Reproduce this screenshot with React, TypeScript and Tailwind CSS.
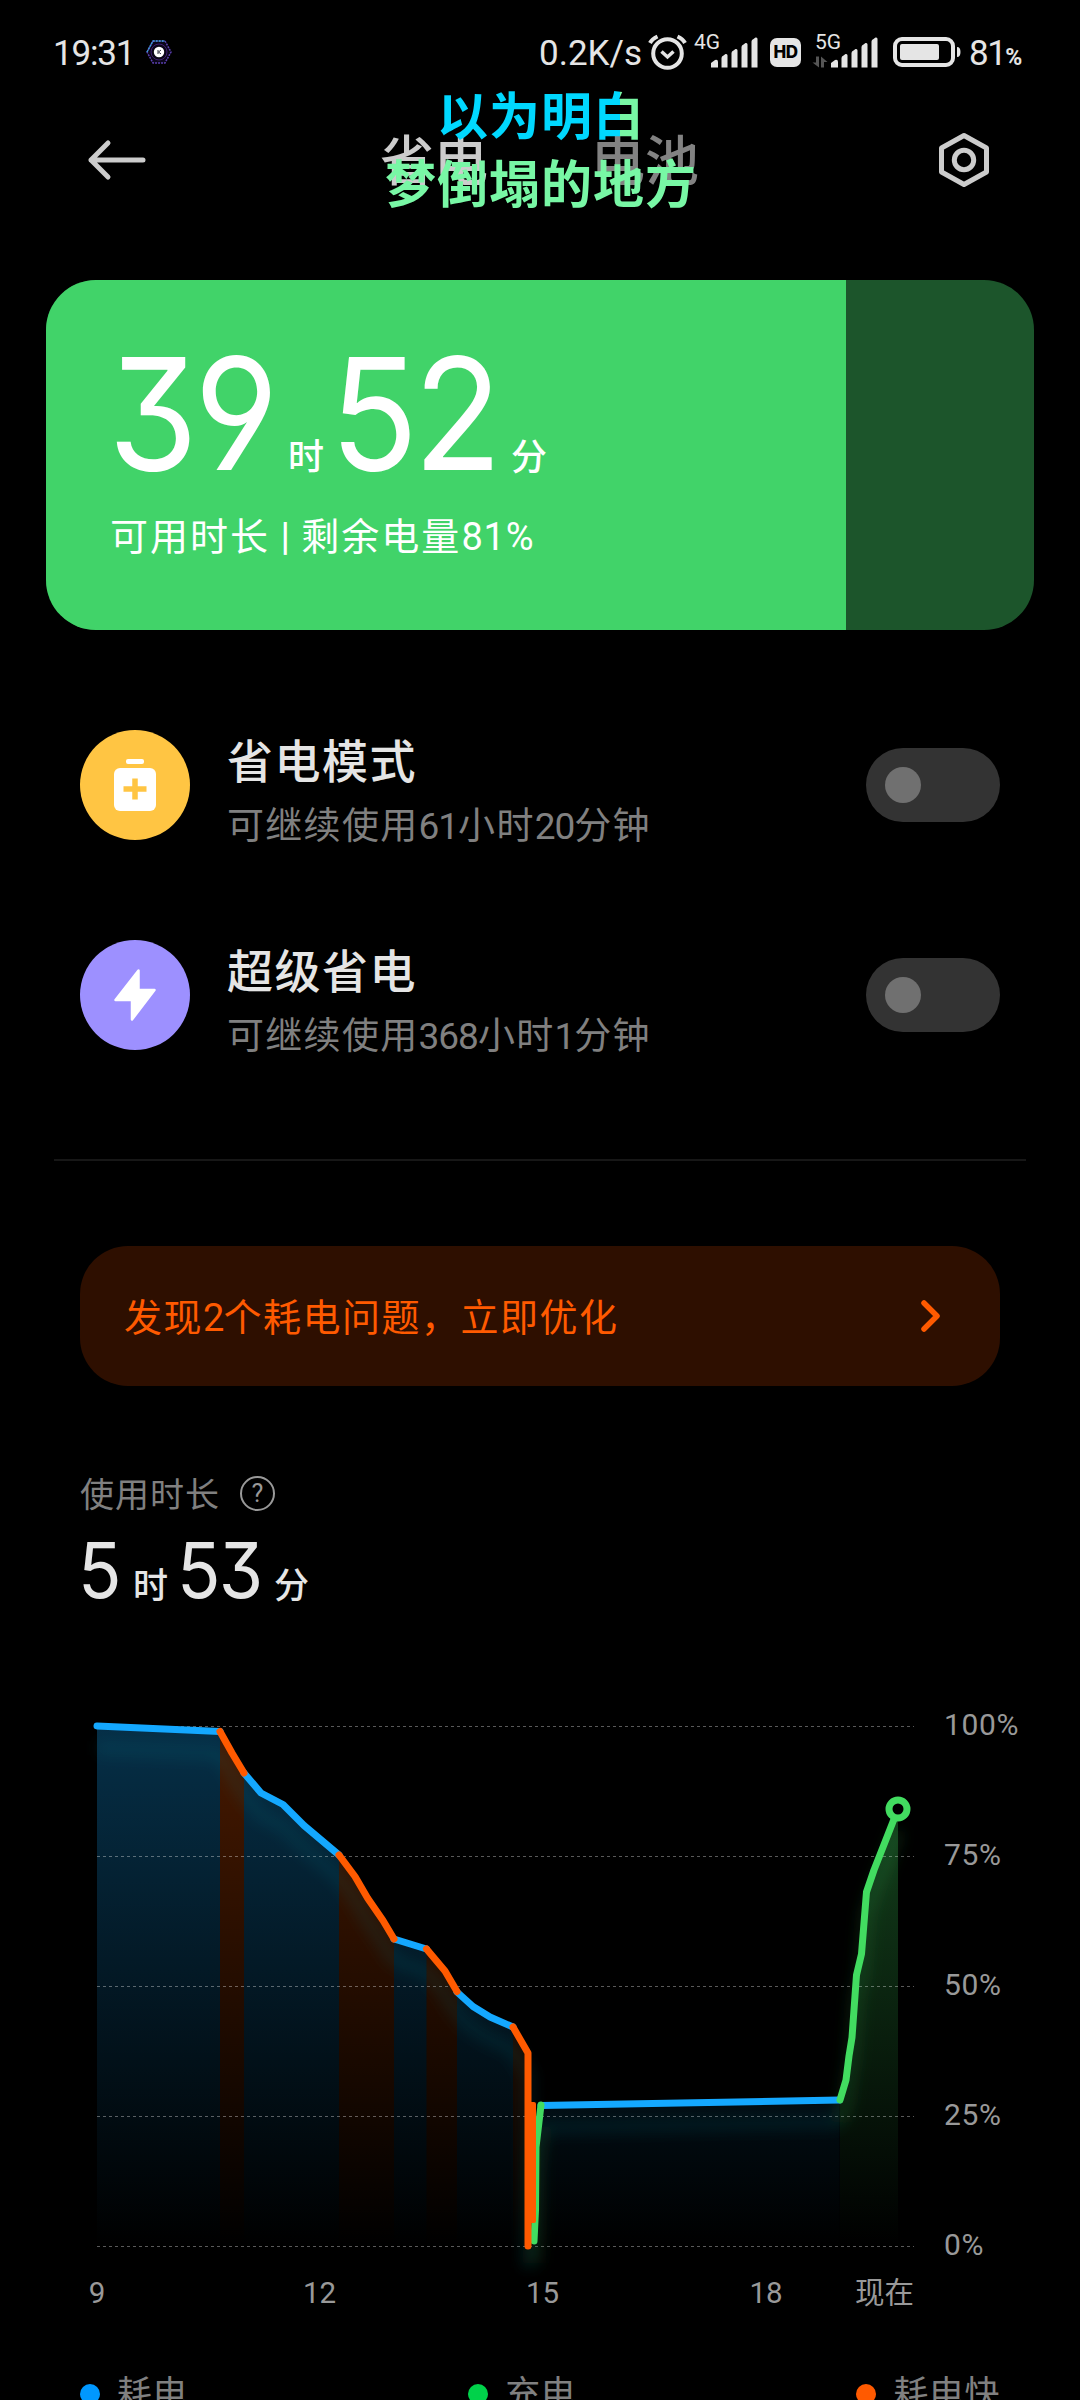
import React, { useState } from 'react';

type Point = [number, number];
type Kind = 'drain' | 'fast' | 'charge';

const COLORS: Record<Kind, string> = {
    drain: '#14a8ff',
    fast: '#ff5a00',
    charge: '#42dc60',
};

// Battery curve in chart coordinates, split where the usage type changes
const SEGMENTS: { kind: Kind; points: Point[] }[] = [
    { kind: 'drain', points: [[97, 46], [220, 51.5]] },
    { kind: 'drain', points: [[244, 93], [261, 113], [283, 124.5], [304, 145.5], [339, 175]] },
    { kind: 'drain', points: [[394, 259], [426.5, 269]] },
    { kind: 'drain', points: [[457, 312], [473, 326.5], [490, 337], [513, 347]] },
    { kind: 'drain', points: [[541, 425.5], [839.5, 420]] },
    { kind: 'charge', points: [[534, 561], [535.5, 530], [536, 467], [541, 425]] },
    { kind: 'fast', points: [[220, 51.5], [232, 73], [244, 93]] },
    { kind: 'fast', points: [[339, 175], [355, 196.5], [367.5, 218], [383, 240.5], [394, 259]] },
    { kind: 'fast', points: [[426.5, 269], [445, 291], [457, 311.5]] },
    { kind: 'fast', points: [[513, 347], [528, 373], [528, 566]] },
    { kind: 'charge', points: [[840, 420], [846, 400], [849, 376], [852, 357.5], [856.5, 295], [861.5, 274], [866.5, 212], [874, 190], [898, 129]] },
];

const GRID = [
    { y: 46.5, label: '100%' },
    { y: 176.5, label: '75%' },
    { y: 306.5, label: '50%' },
    { y: 436.5, label: '25%' },
    { y: 566.5, label: '0%' },
];

const HOURS = [
    { x: 97, label: '9' },
    { x: 319.5, label: '12' },
    { x: 542.5, label: '15' },
    { x: 766, label: '18' },
    { x: 884.5, label: '现在' },
];

const toLine = (points: Point[]) => points.map(([x, y], i) => `${i ? 'L' : 'M'}${x} ${y}`).join(' ');

const toArea = (points: Point[]) =>
    `${toLine(points)} L${points[points.length - 1][0]} 566 L${points[0][0]} 566 Z`;

const Signal = ({ label, arrows }: { label: string; arrows?: boolean }) => (
    <svg width="66" height="40" viewBox="0 0 66 40" fill="#e5e5e5" className="shrink-0 overflow-visible">
        <text x={arrows ? 2 : 1} y="17" fontSize="21" fontFamily="Roboto, sans-serif">{label}</text>
        <path d="M18 35.500v-4.500l4-3q3-1 3 2v5.500z" />
        <path d="M28.500 35.500V26q0-2 2-2.500l2-1.500q2-.5 2 1.500v12z" />
        <path d="M38.500 35.500V21q0-2 2-2.500l2-1.500q2-.5 2 1.500v17z" />
        <path d="M48.500 35.500V15q0-2 2-2.500l2-1.500q2-.5 2 1.500v23z" />
        <path d="M58.500 35.500V9.500q0-2 2-2.500l2-1.500q2-.5 2 1.500v28.500z" />
        {arrows && <path d="M3 24.500h3v11L-.5 30.500H3zM8 35.500v-11l6.500 5.500H11v5.500z" fill="#555" />}
    </svg>
);

const StatusBar = () => (
    <div className="flex h-[104px] items-center pl-[53px] text-[35px] leading-none text-[#e5e5e5]">
        <span className="w-[93px] pt-0.5 tracking-[-1.200px]">19:31</span>
        <svg width="26" height="26" viewBox="0 0 26 26" className="shrink-0">
            <path d="M7 2h12l6 11-6 11H7L1 13z" fill="#0a0618" stroke="#5b3fb0" strokeWidth="1.500" strokeDasharray="2 1" />
            <path d="M1 13L7 2h12" fill="none" stroke="#3aa0d8" strokeWidth="1.500" strokeDasharray="2 1" />
            <circle cx="13" cy="13" r="8" fill="none" stroke="#3d1d6e" />
            <circle cx="13" cy="13" r="5.200" fill="#fff" />
            <path d="M12 11v4M15 11l-2.500 2 2.500 2" stroke="#334" fill="none" />
        </svg>
        <span className="ml-[367px] w-[107px] whitespace-nowrap pt-0.5">0.2K/s</span>
        <svg width="42" height="42" viewBox="0 0 42 42" fill="none" stroke="#e5e5e5" strokeLinecap="round" className="shrink-0">
            <circle cx="21.500" cy="22.500" r="14.300" strokeWidth="4" />
            <path d="M15.500 20.500l6 5.500 6-5.500" strokeWidth="3.500" strokeLinecap="butt" />
            <path d="M4 12Q6 8 11.500 5.500M39 12Q37 8 31.500 5.500" strokeWidth="4" strokeLinecap="butt" />
        </svg>
        <div className="ml-[5px]"><Signal label="4G" /></div>
        <div className="ml-[11px] flex h-[29px] w-[31px] items-center justify-center rounded-[7px] bg-[#e5e5e5] font-[Inter] text-[17px] font-extrabold tracking-[-0.5px] text-black">HD</div>
        <div className="ml-3"><Signal label="5G" arrows /></div>
        <svg width="68" height="32" viewBox="0 0 68 32" className="ml-3.5 shrink-0">
            <rect x="2" y="3" width="58" height="26" rx="7" fill="none" stroke="#e5e5e5" strokeWidth="4" />
            <rect x="7" y="8" width="39" height="16" rx="2" fill="#e5e5e5" />
            <path d="M64 11q3.500 0 3.500 5t-3.500 5z" fill="#e5e5e5" />
        </svg>
        <div className="ml-2 flex items-baseline pt-0.5">
            <span className="tracking-[-1.500px]">81</span>
            <span className="text-[23px] font-bold">%</span>
        </div>
    </div>
);

const Header = () => (
    <div className="flex h-28 items-center pl-[87px]">
        <svg width="60" height="44" viewBox="0 0 60 44" fill="none" stroke="#ccc" strokeWidth="5" strokeLinecap="round" strokeLinejoin="round">
            <path d="M56 22H4M21 5L4 22l17 17" />
        </svg>
        <span className="ml-[233px] w-[211px] pt-[5px] text-[54px] font-medium leading-none text-[#ccc]">省电</span>
        <span className="w-[345px] pt-[5px] text-[54px] font-medium leading-none text-[#828282]">电池</span>
        <svg width="56" height="58" viewBox="0 0 56 58" fill="none" stroke="#ccc" strokeWidth="5" strokeLinejoin="round" className="shrink-0">
            <path d="M28 4.500L50.500 17v24L28 53.500 5.500 41V17z" />
            <circle cx="28" cy="29" r="9.700" />
        </svg>
    </div>
);

// Floating desktop lyrics drawn over the header
const Lyrics = () => (
    <div className="absolute left-px top-[84px] flex w-full flex-col items-center text-[51px] font-bold leading-[68px] tracking-[1px]">
        <span className="bg-[linear-gradient(90deg,#00d8ff_88%,#78f7a5_88%)] bg-clip-text text-transparent">以为明白</span>
        <span className="text-[#78f7a5]">梦倒塌的地方</span>
    </div>
);

const BigNumber = ({ value, className }: { value: string; className: string }) => (
    <span className={`inline-block origin-left scale-x-[.93] font-[Inter] [font-feature-settings:'cv03','cv04','cv09'] ${className}`}>{value}</span>
);

const BatteryCard = () => (
    <div className="mx-[46px] mt-16 flex h-[350px] overflow-hidden rounded-[50px] bg-[#1c552b]">
        <div className="w-[800px] bg-[#41d369] pl-[62px] pt-[60px] text-white">
            <div className="flex h-[148px] items-baseline leading-[148px]">
                <BigNumber value="39" className="w-[180px] text-[156px] tracking-[-4px]" />
                <span className="w-[42px] text-[36px] font-medium">时</span>
                <BigNumber value="52" className="w-[181px] text-[156px] tracking-[-5px]" />
                <span className="text-[36px] font-medium">分</span>
            </div>
            <div className="ml-0.5 mt-[27px] text-[38px] leading-[44px] tracking-[2px]">
                可用时长<span className="font-medium tracking-[1px]"> | </span>剩余电量<span className="tracking-[0.8px]">81%</span>
            </div>
        </div>
    </div>
);

const Toggle = ({ label }: { label: string }) => {
    const [on, setOn] = useState(false);

    return (
        <button
            role="switch"
            aria-checked={on}
            aria-label={label}
            onClick={() => setOn(!on)}
            className={`flex h-[74px] w-[134px] items-center rounded-full px-[19px] cursor-pointer ${on ? 'justify-end bg-[#42d46a]' : 'bg-[#333]'}`}>
            <span className="size-9 rounded-full bg-[#707070]" />
        </button>
    );
};

interface ModeRowProps {
    title: string;
    color: string;
    icon: React.ReactNode;
    children: React.ReactNode;
}

const ModeRow = ({ title, color, icon, children }: ModeRowProps) => (
    <div className="flex h-[110px] items-center">
        <div className={`flex size-[110px] items-center justify-center rounded-full ${color}`}>{icon}</div>
        <div className="ml-[37px] flex-1 pt-[15px]">
            <div className="text-[46px] font-medium leading-[60px] tracking-[1.500px] text-[#e5e5e5]">{title}</div>
            <div className="mt-[9px] text-[37px] leading-[52px] tracking-[1.300px] text-[#808080]">{children}</div>
        </div>
        <Toggle label={title} />
    </div>
);

const Digits = ({ children }: { children: React.ReactNode }) => <span className="tracking-[-1px]">{children}</span>;

const UsageChart = () => (
    <svg width="1080" height="640" viewBox="0 0 1080 640" className="block" fontFamily="Roboto, 'Noto Sans CJK SC', sans-serif">
        <defs>
            {(Object.keys(COLORS) as Kind[]).map((kind) => (
                <linearGradient key={kind} id={kind} gradientUnits="userSpaceOnUse" x1="0" y1="46" x2="0" y2="566">
                    <stop offset="0" stopColor={COLORS[kind]} stopOpacity={kind === 'charge' ? 0.34 : 0.28} />
                    <stop offset="1" stopColor={COLORS[kind]} stopOpacity="0" />
                </linearGradient>
            ))}
            <filter id="glow" filterUnits="userSpaceOnUse" x="0" y="0" width="1080" height="640">
                <feGaussianBlur stdDeviation="7" />
            </filter>
        </defs>

        {SEGMENTS.map(({ kind, points }, i) => (
            <path key={i} d={toArea(points)} fill={`url(#${kind})`} />
        ))}

        {GRID.map(({ y, label }) => (
            <g key={label}>
                <line x1="97" x2="914" y1={y} y2={y} stroke="#fff" strokeOpacity=".35" strokeDasharray="3 3" />
                <text x="944" y={y + 8} fontSize="30" letterSpacing=".6" fill="#999">{label}</text>
            </g>
        ))}

        <g fill="none" strokeWidth="14" strokeLinejoin="round" filter="url(#glow)" transform="translate(0 22)">
            {SEGMENTS.map(({ kind, points }, i) => (
                <path key={i} d={toLine(points)} stroke={kind === 'charge' ? '#42dc60' : '#1e8aa0'} strokeOpacity=".12" />
            ))}
        </g>

        <g fill="none" strokeWidth="7" strokeLinecap="round" strokeLinejoin="round">
            {SEGMENTS.map(({ kind, points }, i) => (
                <path key={i} d={toLine(points)} stroke={COLORS[kind]} />
            ))}
        </g>
        <rect x="528" y="422" width="8" height="121" rx="2" fill="#ff5a00" />
        <circle cx="898" cy="129" r="9" fill="#000" stroke="#42dc60" strokeWidth="7" />

        {HOURS.map(({ x, label }) => (
            <text key={label} x={x} y="622.500" fontSize="29.500" textAnchor="middle" fill="#999">{label}</text>
        ))}
    </svg>
);

const LegendItem = ({ label, color }: { label: string; color: string }) => (
    <div className="flex items-center gap-[17px]">
        <span className={`size-5 rounded-full ${color}`} />
        <span className="pt-0.5 text-[35px] leading-none tracking-[0.5px] text-[#808080]">{label}</span>
    </div>
);

const App = () => {
    return (
        <div lang="zh-CN" className="relative h-[2400px] w-[1080px] overflow-hidden bg-black font-[Roboto,'Noto_Sans_CJK_SC',sans-serif]">
            <StatusBar />
            <Header />
            <Lyrics />
            <BatteryCard />

            {/* Power saving modes */}
            <div className="mx-20 mt-[100px] flex flex-col gap-[100px]">
                <ModeRow
                    title="省电模式"
                    color="bg-[#ffc543]"
                    icon={
                        <svg width="42" height="52" viewBox="0 0 42 52">
                            <rect x="12" width="18" height="5" rx="2" fill="#fff" />
                            <rect y="9" width="42" height="43" rx="6" fill="#fff" />
                            <path d="M21 19.500v21M9.500 30h23" stroke="#ffc543" strokeWidth="5.500" />
                        </svg>
                    }>
                    可继续使用<Digits>61</Digits>小时<Digits>20</Digits>分钟
                </ModeRow>
                <ModeRow
                    title="超级省电"
                    color="bg-[#9d90ff]"
                    icon={
                        <svg width="42" height="52" viewBox="0 0 42 52" fill="#fff" stroke="#fff" strokeWidth="2.500" strokeLinejoin="round">
                            <path d="M24.500 1.500V21H40.500L18 50.500V31H1.500z" />
                        </svg>
                    }>
                    可继续使用<Digits>368</Digits>小时<Digits>1</Digits>分钟
                </ModeRow>
            </div>

            <div className="mx-[54px] mt-[109px] h-0.5 bg-[#171717]" />

            {/* Warning banner */}
            <div className="mx-20 mt-[85px] flex h-[140px] items-center justify-between rounded-[48px] bg-[#2e0f00] pl-11 pr-[57px] text-[#ff5a00]">
                <span className="pt-[3px] text-[38px] leading-none tracking-[1.500px]">发现<Digits>2</Digits>个耗电问题，立即优化</span>
                <svg width="24" height="36" viewBox="0 0 24 36" fill="none" stroke="#ff5a00" strokeWidth="5.500" strokeLinecap="round" strokeLinejoin="round">
                    <path d="M5 5l13 13L5 31" />
                </svg>
            </div>

            {/* Usage time */}
            <div className="mx-20 mt-[86px]">
                <div className="flex h-[42px] items-center text-[34px] leading-none tracking-[1px] text-[#808080]">
                    <span className="pt-[3px]">使用时长</span>
                    <span className="ml-5 flex size-[35px] items-center justify-center rounded-full border-2 border-[#999] pl-px text-[25px] text-[#999]">?</span>
                </div>
                <div className="mt-[19px] flex h-[76px] items-baseline leading-[75px] text-[#e5e5e5]">
                    <BigNumber value="5" className="-ml-0.5 w-[55px] text-[77px]" />
                    <span className="w-[44px] text-[35px] font-medium">时</span>
                    <BigNumber value="53" className="w-[97px] text-[77px] tracking-[-2px]" />
                    <span className="text-[35px] font-medium">分</span>
                </div>
            </div>

            <div className="mt-[71px]">
                <UsageChart />
            </div>

            <div className="mx-20 mt-[55px] flex justify-between">
                <LegendItem label="耗电" color="bg-[#0098ff]" />
                <LegendItem label="充电" color="bg-[#00d24a]" />
                <LegendItem label="耗电快" color="bg-[#ff5a00]" />
            </div>
        </div>
    );
};

export default App;
